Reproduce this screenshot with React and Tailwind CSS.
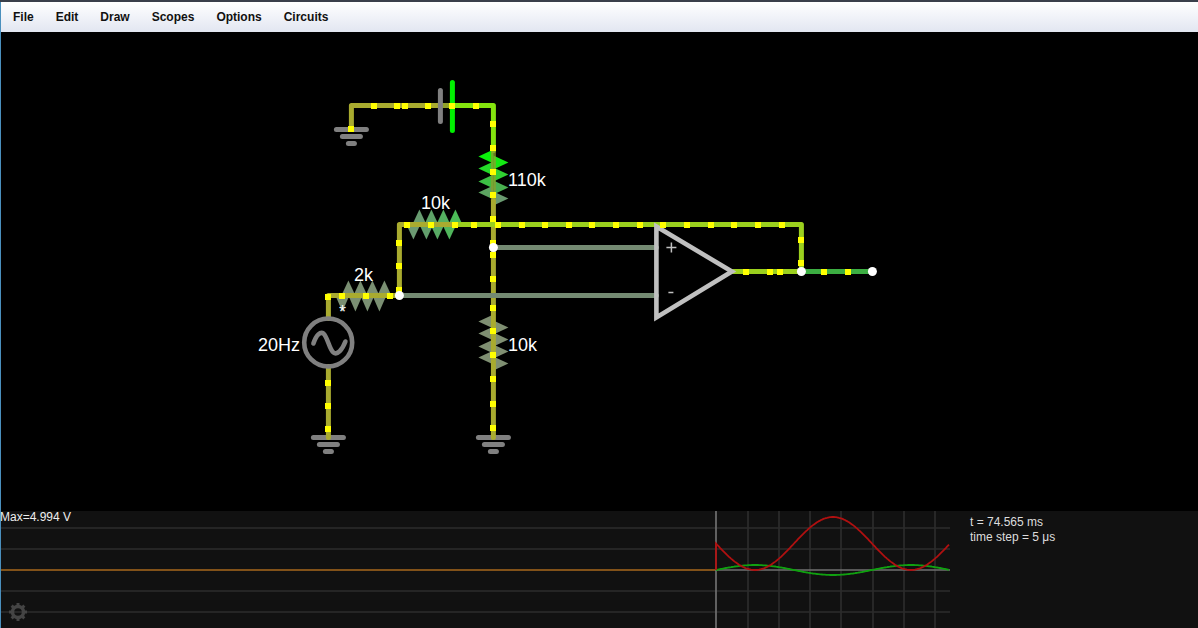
import React from 'react';

const OLIVE = '#a9ab2f';
const LIME = '#9bd01e';
const BRIGHT = '#84e40e';
const GREY_WIRE = '#748a72';

const menus = ['File', 'Edit', 'Draw', 'Scopes', 'Options', 'Circuits'];

const wires = [
  { points: '351,129 351,105 440,105', color: OLIVE },
  { points: '440,105 452,105', color: '#8f9f28' },
  { points: '452,105 493,105 493,150', color: BRIGHT },
  { points: '493,150 493,200', color: '#8aa02c', opacity: 0.75 },
  { points: '493,200 493,437', color: OLIVE },
  { points: '328,318 328,295 399,295 399,224 460,224', color: OLIVE },
  { points: '460,224 801,224 801,271', color: LIME },
  { points: '733,271 801,271', color: LIME },
  { points: '801,271 872,271', color: '#3cae42' },
  { points: '328,366 328,437', color: OLIVE },
  { points: '399,295 656,295', color: GREY_WIRE },
  { points: '493,247 656,247', color: GREY_WIRE }
];

const dots = [
  [351, 128],
  ...[374, 397, 405, 428, 452, 476].map((x) => [x, 105]),
  ...[123, 147, 171, 194, 218, 242, 254, 278, 307, 330, 354, 378, 403, 427].map((y) => [493, y]),
  ...[407, 431, 455, 474, 498, 522, 545, 569, 592, 616, 640, 663, 687, 711, 734, 758, 782].map((x) => [x, 224]),
  [399, 242],
  [399, 265],
  [399, 289],
  [342, 295],
  [366, 295],
  [390, 295],
  [328, 296],
  [328, 382],
  [328, 405],
  [328, 428],
  [801, 239],
  [801, 262],
  ...[746, 770, 780, 824, 848].map((x) => [x, 271])
];

const nodes = [[493, 247], [399, 295], [801, 271], [872, 271]];

// each tooth of a resistor is its own triangle so the voltage colour can change along it
const resistors = [
  {
    colors: ['#0af00a', '#14ea14', '#24da28', '#30d032', '#3cc044', '#48b050', '#5ca460', '#6a9a70'],
    tips: [
      [478, 156], [508, 162], [478, 168], [508, 174], [478, 181], [508, 187], [478, 192], [508, 198]
    ],
    axis: 'y',
    line: 493
  },
  {
    colors: ['#7f8f72', '#7f8f72', '#7f8f72', '#7f8f72', '#7f8f72', '#7f8f72', '#7f8f72', '#7f8f72'],
    tips: [
      [478, 321], [508, 327], [478, 333], [508, 339], [478, 346], [508, 351], [478, 357], [508, 363]
    ],
    axis: 'y',
    line: 493
  },
  {
    colors: ['#7a8f72', '#7a8f72', '#7a8f72', '#7a8f72', '#7a8f72', '#7a8f72', '#7a8f72', '#7a8f72'],
    tips: [
      [348, 280], [355, 311], [360, 280], [367, 311], [372, 280], [379, 311], [384, 280], [342, 311]
    ],
    axis: 'x',
    line: 295
  },
  {
    colors: ['#6c9a72', '#689c70', '#629f6c', '#5ea468', '#58aa64', '#54b060', '#50b65c', '#4cbc58'],
    tips: [
      [413, 239], [419, 209], [426, 239], [431, 209], [437, 239], [443, 209], [449, 239], [455, 209]
    ],
    axis: 'x',
    line: 224
  }
];

const grounds = [[351, 129], [328, 437], [493, 437]];

const labels = [
  { text: '110k', x: 508, y: 186 },
  { text: '10k', x: 421, y: 209 },
  { text: '2k', x: 354, y: 281 },
  { text: '20Hz', x: 258, y: 351 },
  { text: '10k', x: 508, y: 351 }
];

const gridX = [748, 779, 810, 841, 873, 904, 935];
const gridY = [528, 549, 591, 612];

const range = Array.from({ length: 234 }, (_, i) => 716 + i);
const redTrace = range
  .map((x) => `${x},${(543.5 - 26.5 * Math.cos((2 * Math.PI * (x - 833)) / 156)).toFixed(1)}`)
  .join(' ');
const greenTrace = range
  .map((x) => `${x},${(570 - 5 * Math.sin((2 * Math.PI * (x - 716)) / 156)).toFixed(1)}`)
  .join(' ');

function Ground({ x, y }) {
  return (
    <g stroke="#808080" strokeWidth="5" strokeLinecap="round">
      <line x1={x - 15} y1={y} x2={x + 15} y2={y} />
      <line x1={x - 9} y1={y + 7} x2={x + 9} y2={y + 7} />
      <line x1={x - 3} y1={y + 14} x2={x + 3} y2={y + 14} />
    </g>
  );
}

function Resistor({ colors, tips, axis, line }) {
  return tips.map(([x, y], i) => {
    const points =
      axis === 'y'
        ? `${x},${y} ${line},${y - 7} ${line},${y + 7}`
        : `${x},${y} ${x - 7},${line} ${x + 7},${line}`;
    return <polygon key={i} points={points} fill={colors[i]} />;
  });
}

function Circuit() {
  return (
    <svg className="block" width="1197" height="479" viewBox="1 32 1197 479">
      <g transform="translate(0.4 0.5)">
        {resistors.map((r, i) => (
          <Resistor key={i} {...r} />
        ))}
        {grounds.map(([x, y]) => (
          <Ground key={`${x}-${y}`} x={x} y={y} />
        ))}
        {wires.map((w, i) => (
          <polyline
            key={i}
            points={w.points}
            fill="none"
            stroke={w.color}
            strokeOpacity={w.opacity || 1}
            strokeWidth="5"
            strokeLinecap="round"
            strokeLinejoin="round"
          />
        ))}

        <line x1="440" y1="90" x2="440" y2="121" stroke="#808080" strokeWidth="5" strokeLinecap="round" />
        <line x1="452" y1="82" x2="452" y2="130" stroke="#00f000" strokeWidth="5" strokeLinecap="round" />

        <circle cx="327.8" cy="342" r="24" fill="none" stroke="#808080" strokeWidth="4.6" />
        <path
          d="M313 343 C 316 334 320 331 323 333 C 327 336 329 349 333 352 C 337 355 342 349 345 341"
          fill="none"
          stroke="#808080"
          strokeWidth="4.6"
          strokeLinecap="round"
        />

        <polygon points="656,226 731.5,271 656,317" fill="none" stroke="#c0c0c0" strokeWidth="4.6" />
        <line x1="666" y1="247" x2="676" y2="247" stroke="#c0c0c0" strokeWidth="1.5" />
        <line x1="671" y1="242" x2="671" y2="252" stroke="#c0c0c0" strokeWidth="1.5" />
        <line x1="668" y1="292" x2="673" y2="292" stroke="#c0c0c0" strokeWidth="1.5" />
      </g>

      {dots.map(([x, y]) => (
        <rect key={`${x}-${y}`} x={x - 3} y={y - 2} width="6" height="6" fill="#ffff00" />
      ))}
      {nodes.map(([x, y]) => (
        <circle key={`${x}-${y}`} cx={x + 0.4} cy={y + 0.5} r="4.5" fill="#ffffff" />
      ))}

      {labels.map((l) => (
        <text key={l.text + l.x} x={l.x} y={l.y} fill="#ffffff" fontSize="18" fontFamily="'Liberation Sans', sans-serif">
          {l.text}
        </text>
      ))}
      <text x="339" y="318" fill="#ffffff" fontSize="18" fontFamily="'Liberation Sans', sans-serif">*</text>
    </svg>
  );
}

function Gear() {
  return (
    <g stroke="#444444">
      <circle cx="18" cy="612" r="5.5" fill="none" strokeWidth="3.5" />
      {[0, 45, 90, 135].map((deg) => (
        <line key={deg} x1="18" y1="603" x2="18" y2="621" strokeWidth="3" transform={`rotate(${deg} 18 612)`} strokeDasharray="3 12" />
      ))}
    </g>
  );
}

function ScopeChart() {
  return (
    <svg className="block" width="949" height="117" viewBox="1 511 949 117">
      {gridY.map((y) => (
        <line key={y} x1="1" y1={y} x2="950" y2={y} stroke="#2c2c2c" strokeWidth="1.7" />
      ))}
      {gridX.map((x) => (
        <line key={x} x1={x} y1="511" x2={x} y2="628" stroke="#2c2c2c" strokeWidth="1.7" />
      ))}
      <line x1="1" y1="570" x2="716" y2="570" stroke="#a8681c" strokeWidth="1.7" />
      <line x1="716" y1="570" x2="950" y2="570" stroke="#707070" strokeWidth="1.7" />
      <line x1="716" y1="511" x2="716" y2="628" stroke="#707070" strokeWidth="1.7" />
      <polyline points={greenTrace} fill="none" stroke="#10a010" strokeWidth="1.8" />
      <polyline points={`716,570 ${redTrace}`} fill="none" stroke="#b01010" strokeWidth="1.8" />
      <Gear />
    </svg>
  );
}

export default function App() {
  return (
    <div className="flex h-screen w-[1198px] flex-col overflow-hidden bg-black font-['Liberation_Sans',sans-serif]">
      <div className="h-[2px] bg-[#3a3f4b]" />
      <div className="flex min-h-0 flex-1 flex-col border-l border-[#4a8fbd]">
        <div className="flex h-[30px] items-center bg-gradient-to-b from-white to-[#e2e6f1] pl-[1px] text-[12px] font-bold text-[#111111]">
          {menus.map((m) => (
            <div key={m} className="px-[11px]">
              {m}
            </div>
          ))}
        </div>
        <div className="flex-1">
          <Circuit />
        </div>
        <div className="relative flex h-[117px] bg-[#111111]">
          <ScopeChart />
          <div className="absolute left-[-1px] top-0 text-[12px] leading-[13px] text-[#eeeeee]">Max=4.994 V</div>
          <div className="pl-5 pt-[4px] text-[12px] leading-[15px] text-[#dddddd]">
            <div>t = 74.565 ms</div>
            <div>time step = 5 μs</div>
          </div>
        </div>
      </div>
    </div>
  );
}
